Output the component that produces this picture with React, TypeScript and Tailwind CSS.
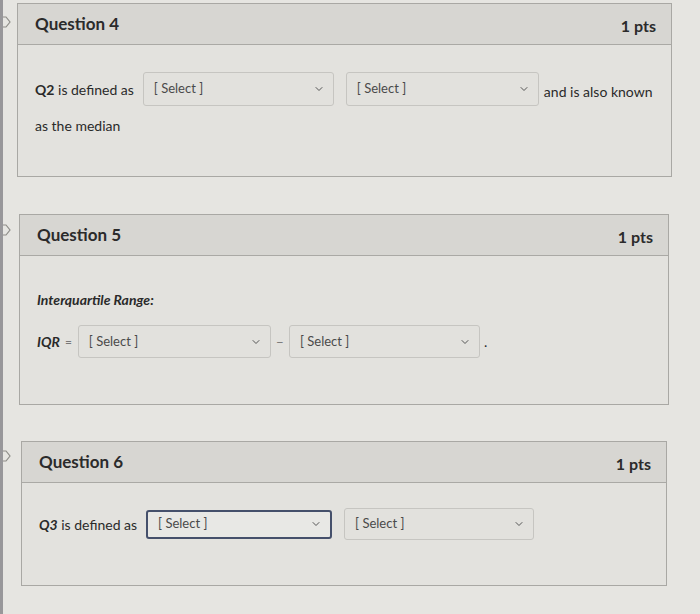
import { ReactNode } from "react";
import { ChevronDown } from "lucide-react";

const font = { fontFamily: "Lato, 'Open Sans', sans-serif" };

//Dropdown box as Canvas renders it
const SelectBox = ({ w, h = 34, focused = false }: { w: number; h?: number; focused?: boolean }) => (
  <div
    style={{ width: w, height: h }}
    className={`shrink-0 flex items-center justify-between pl-[10px] pr-[8px] rounded-[3px] ${
      focused
        ? "border-2 border-[#45506b] bg-[#e8e8e5]"
        : "border border-[#c6c5c1] bg-[#e2e1dd]"
    }`}
  >
    <span className="text-[13px] text-[#4a4a4a] whitespace-nowrap">[ Select ]</span>
    <ChevronDown className="w-3 h-3 text-[#555]" strokeWidth={2} />
  </div>
);

const Bookmark = () => (
  <svg width="11" height="12" viewBox="0 0 11 12" className="shrink-0">
    <path d="M0 1 H6 L10 6 L6 11 H0" fill="none" stroke="#8d8c88" strokeWidth="1.2" />
  </svg>
);

interface CardProps {
  title: string;
  ml: string;
  w: string;
  iconTop: string;
  bodyClass: string;
  children: ReactNode;
}

const QuestionCard = ({ title, ml, w, iconTop, bodyClass, children }: CardProps) => (
  <div className="flex">
    <div className={`w-0 ${iconTop}`}>
      <div className="-ml-[3px]">
        <Bookmark />
      </div>
    </div>
    <div className={`${ml} ${w} border border-[#a9a8a4]`}>
      <div className="h-[41px] bg-[#d7d6d2] border-b border-[#aaa9a5] px-[15px] flex items-center justify-between">
        <h2 className="text-[17px] font-bold text-[#2b2b2b] pl-[2px]">{title}</h2>
        <span className="text-[16px] font-bold text-[#2b2b2b] pt-1">1 pts</span>
      </div>
      <div className={`bg-[#e3e2de] text-[14px] text-[#2a2a2a] px-[17px] ${bodyClass}`}>{children}</div>
    </div>
  </div>
);

const App = () => {
  return (
    <div style={font} className="w-[700px] h-[614px] overflow-hidden bg-[#e6e5e1] border-l-[3px] border-[#98979a] pt-[3px]">
      {/* Question 4 */}
      <QuestionCard title="Question 4" ml="ml-[14px]" w="w-[655px]" iconTop="mt-[13px]" bodyClass="pt-[27px] pb-[40px]">
        <div className="flex items-center whitespace-nowrap">
          <span className="shrink-0">
            <b>Q2</b> is defined as
          </span>
          <div className="ml-[9px] shrink-0">
            <SelectBox w={191} />
          </div>
          <div className="ml-[12px] shrink-0">
            <SelectBox w={193} />
          </div>
          <span className="ml-[5px] pt-1 shrink-0">and is also known</span>
        </div>
        <p className="mt-[9px]">as the median</p>
      </QuestionCard>

      {/* Question 5 */}
      <div className="mt-[37px]">
        <QuestionCard title="Question 5" ml="ml-[16px]" w="w-[650px]" iconTop="mt-[10px]" bodyClass="pt-[33px] pb-[46px]">
          <p className="font-bold italic">Interquartile Range:</p>
          <div className="flex items-center mt-[15px] whitespace-nowrap">
            <span className="font-bold italic">IQR</span>
            <span className="ml-[5px] text-[12px] text-[#777]">=</span>
            <div className="ml-[6px]">
              <SelectBox w={193} h={33} />
            </div>
            <span className="mx-[5px] text-[#777]">–</span>
            <SelectBox w={191} h={33} />
            <span className="ml-[4px]">.</span>
          </div>
        </QuestionCard>
      </div>

      {/* Question 6 */}
      <div className="mt-[36px]">
        <QuestionCard title="Question 6" ml="ml-[18px]" w="w-[646px]" iconTop="mt-[9px]" bodyClass="pt-[25px] pb-[45px]">
          <div className="flex items-center whitespace-nowrap">
            <span>
              <b className="italic">Q3</b> is defined as
            </span>
            <div className="ml-[9px]">
              <SelectBox w={186} h={29} focused />
            </div>
            <div className="ml-[12px]">
              <SelectBox w={190} h={32} />
            </div>
          </div>
        </QuestionCard>
      </div>
    </div>
  );
};

export default App;
